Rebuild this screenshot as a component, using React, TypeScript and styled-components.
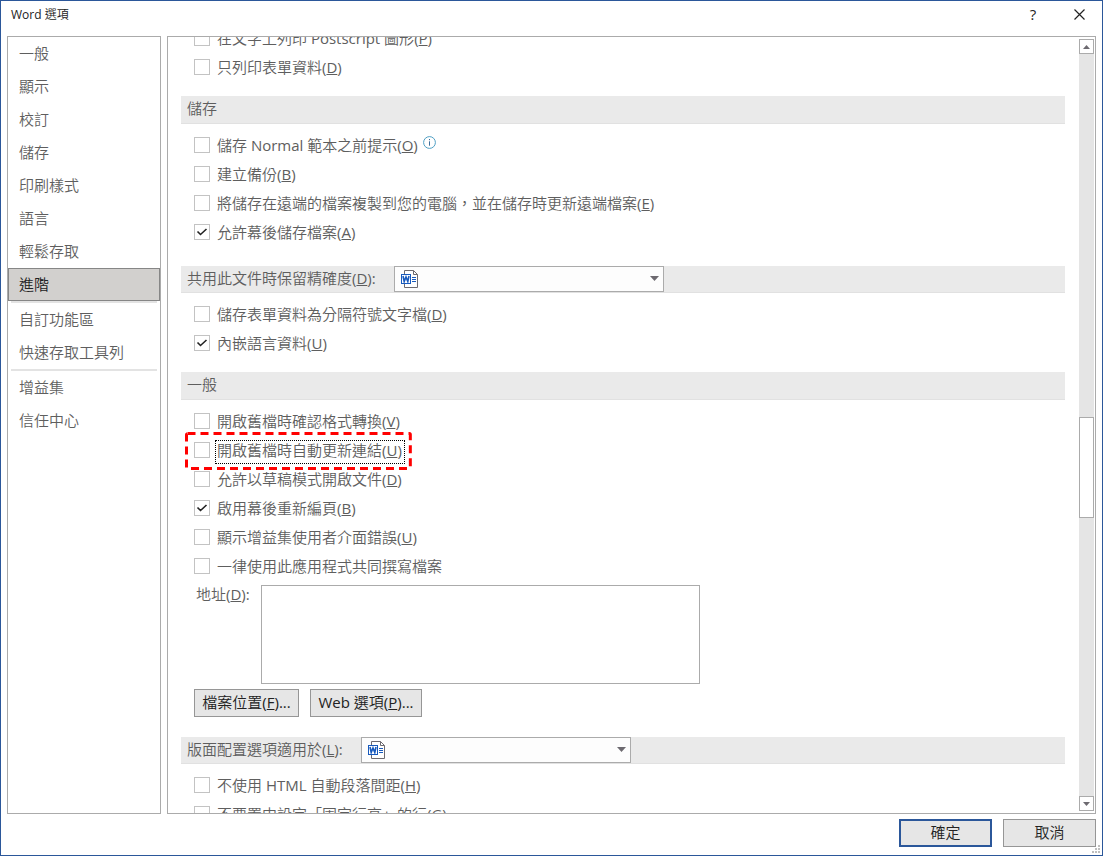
import React from 'react';
import styled, { createGlobalStyle, css } from 'styled-components';

const GlobalStyle = createGlobalStyle`
  *, *::before, *::after { box-sizing: border-box; }
  body { margin: 0; background: #fff; }
  body, button, select, textarea {
    font-family: 'Open Sans', 'Noto Sans CJK TC DemiLight', 'Noto Sans CJK TC', sans-serif;
    font-size: 15px;
    font-weight: 400;
    line-height: 20px;
  }
`;

const Dialog = styled.div`
  display: flex;
  flex-direction: column;
  height: 100vh;
  border: 1px solid #2b579a;
  background: #fff;
  color: #5e5e5e;
`;

const TitleBar = styled.header`
  display: flex;
  align-items: center;
  flex: none;
  height: 35px;
  padding: 0 14px 8px 10px;
`;

const Title = styled.h1`
  flex: 1;
  margin: 0;
  font-size: 12px;
  line-height: 16px;
  font-weight: 400;
  color: #222;
`;

const TitleButton = styled.button`
  display: flex;
  align-items: center;
  justify-content: center;
  width: 46px;
  height: 27px;
  padding: 0 0 2px;
  border: 0;
  background: none;
  color: #222;

  &:last-child { width: 18px; margin-left: 14px; padding: 0; }
`;

const Panels = styled.div`
  display: flex;
  flex: 1;
  min-height: 0;
  gap: 6px;
  padding: 0 6px;
`;

const Sidebar = styled.nav`
  flex: none;
  width: 154px;
  border: 1px solid #ababab;
`;

const NavItem = styled.button<{ $active?: boolean }>`
  display: block;
  width: 100%;
  height: 33px;
  padding: 0 11px 2px 10px;
  border: 1px solid transparent;
  background: none;
  color: inherit;
  text-align: left;

  ${(p) => p.$active && css`
    border-color: #868686;
    background: #d2d0ce;
    color: #222;
  `}
`;

const NavDivider = styled.hr`
  height: 2px;
  margin: 0 3px;
  border: 0;
  background: #e3e3e3;
`;

const ContentPanel = styled.main`
  display: flex;
  flex: 1;
  min-width: 0;
  border: 1px solid #ababab;
`;

const Viewport = styled.div`
  flex: 1;
  min-width: 0;
  overflow: hidden;
  padding: 0 14px 0 13px;
`;

const ScrolledContent = styled.div`
  margin-top: -13px;
`;

const Section = styled.section<{ $gap?: number }>`
  padding-bottom: ${(p) => p.$gap ?? 14}px;
`;

const SectionHeader = styled.div<{ $compact?: boolean }>`
  display: flex;
  align-items: flex-start;
  height: ${(p) => (p.$compact ? 27 : 28)}px;
  margin-bottom: 7px;
  padding-left: 6px;
  border-bottom: 1px solid #e1e1e1;
  background: #eaeaea;
`;

const SectionTitle = styled.h2`
  margin: 0;
  font-size: 15px;
  line-height: 24px;
  font-weight: 400;
`;

const SectionLabel = styled.label`
  margin-right: 18px;
  line-height: 24px;
`;

const Picker = styled.span`
  position: relative;
  display: block;
  width: 270px;
  height: 26px;
`;

const PickerSelect = styled.select`
  display: block;
  width: 100%;
  height: 100%;
  padding: 0 24px 0 28px;
  border: 1px solid #ababab;
  border-radius: 0;
  background: #fdfdfd;
  appearance: none;
`;

const PickerIcon = styled.span`
  position: absolute;
  top: 4px;
  left: 7px;
  display: flex;
  pointer-events: none;
`;

const PickerArrow = styled.span`
  position: absolute;
  top: 10px;
  right: 5px;
  display: flex;
  pointer-events: none;
`;

const Row = styled.div`
  display: flex;
  align-items: flex-start;
  height: 29px;
  padding-left: 13px;
`;

const Option = styled.label`
  position: relative;
  display: flex;
  align-items: center;
  gap: 5px;
  height: 28px;
`;

const CheckBox = styled.input`
  flex: none;
  width: 16px;
  height: 16px;
  margin: 0;
  border: 1px solid #c3c3c3;
  background: #fff;
  appearance: none;
  outline: none;

  &:checked {
    background: #fff url("data:image/svg+xml,%3Csvg xmlns='http://www.w3.org/2000/svg' viewBox='0 0 14 14'%3E%3Cpath d='M2.5 6.5l3 3 6-5.5' fill='none' stroke='%23222' stroke-width='1.6'/%3E%3C/svg%3E") center / 14px 14px no-repeat;
  }
`;

const OptionText = styled.span<{ $focused?: boolean }>`
  height: 24px;
  margin-top: 4px;
  padding: 0 2px 0 1px;
  border: 1px ${(p) => (p.$focused ? 'dotted #000' : 'solid transparent')};
  line-height: 19px;
  white-space: nowrap;
`;

const CalloutFrame = styled.svg`
  position: absolute;
  top: -4px;
  left: -9px;
  width: calc(100% + 16px);
  height: calc(100% + 10px);
  pointer-events: none;
`;

const InfoButton = styled.button`
  display: flex;
  margin: 5px 0 0 2px;
  padding: 0;
  border: 0;
  background: none;
`;

const AddressRow = styled.div`
  display: flex;
  align-items: flex-start;
  gap: 11px;
  padding: 4px 0 5px 15px;
`;

const AddressLabel = styled.label`
  line-height: 19px;
`;

const AddressBox = styled.textarea`
  display: block;
  width: 439px;
  height: 99px;
  border: 1px solid #ababab;
  background: #fff;
  resize: none;
`;

const ButtonRow = styled.div`
  display: flex;
  gap: 11px;
  padding-left: 13px;
`;

const PushButton = styled.button<{ $width: number; $primary?: boolean }>`
  width: ${(p) => p.$width}px;
  height: 28px;
  padding: 0 0 2px;
  border: ${(p) => (p.$primary ? '2px solid #2b579a' : '1px solid #969696')};
  background: #e6e6e6;
  color: #222;
  white-space: nowrap;
`;

const ScrollBar = styled.div`
  display: flex;
  flex-direction: column;
  flex: none;
  width: 15px;
  margin: 2px 1px 2px 0;
  background: #e5e5e5;
`;

const ScrollButton = styled.button`
  display: flex;
  align-items: center;
  justify-content: center;
  flex: none;
  height: 15px;
  padding: 0;
  border: 1px solid #ababab;
  background: #fff;
`;

const ScrollSpace = styled.div<{ $grow: number }>`
  flex: ${(p) => p.$grow} 1 0;
`;

const ScrollThumb = styled.div`
  flex: 99 1 0;
  border: 1px solid #ababab;
  background: #fff;
`;

const Footer = styled.footer`
  display: flex;
  position: relative;
  flex: none;
  justify-content: flex-end;
  gap: 11px;
  padding: 5px 6px 8px;
`;

const Grip = styled.svg`
  position: absolute;
  right: 2px;
  bottom: 2px;
`;

const WordDocumentIcon = () => (
  <svg width="18" height="18" viewBox="0 0 18 18" aria-hidden="true">
    <path d="M3.5 .5h9l4 4v13h-13z" fill="#fff" stroke="#6d6a70" />
    <path d="M12.5 .5v4h4" fill="none" stroke="#6d6a70" />
    <path d="M11 7.5h4M11 9.5h4M11 11.5h4" stroke="#185abd" />
    <rect x="0.5" y="4.5" width="9" height="9" fill="#fff" stroke="#185abd" />
    <path d="M2 6l1.2 5.5L5 7l1.8 4.5L8 6" fill="none" stroke="#185abd" strokeWidth="1.6" />
  </svg>
);

const InfoIcon = () => (
  <svg width="13" height="13" viewBox="0 0 13 13" aria-hidden="true">
    <circle cx="6.5" cy="6.5" r="5.9" fill="none" stroke="#4f9fc4" />
    <path d="M6.5 5.3v4.4M6.5 3v1.2" stroke="#3d6f9c" />
  </svg>
);

const Key = ({ k }: { k: string }) => <>(<u>{k}</u>)</>;

type CheckOptionProps = {
  text: string;
  k?: string;
  checked?: boolean;
  focused?: boolean;
  info?: boolean;
};

const CheckOption = ({ text, k, checked, focused, info }: CheckOptionProps) => (
  <Row>
    <Option>
      <CheckBox type="checkbox" defaultChecked={checked} />
      <OptionText $focused={focused}>{text}{k && <Key k={k} />}</OptionText>
      {focused && (
        <CalloutFrame aria-hidden="true">
          <rect x="1.5" y="1.5" width="calc(100% - 3px)" height="calc(100% - 3px)" rx="1"
            fill="none" stroke="#f00" strokeWidth="3" strokeDasharray="8 5" />
        </CalloutFrame>
      )}
    </Option>
    {info && <InfoButton aria-label="資訊"><InfoIcon /></InfoButton>}
  </Row>
);

const DocumentPicker = ({ id }: { id: string }) => (
  <Picker>
    <PickerSelect id={id}><option value="" /></PickerSelect>
    <PickerIcon><WordDocumentIcon /></PickerIcon>
    <PickerArrow>
      <svg width="9" height="5" viewBox="0 0 9 5" aria-hidden="true"><path d="M0 0h9L4.5 5z" fill="#6d6a70" /></svg>
    </PickerArrow>
  </Picker>
);

const navGroups = [
  ['一般', '顯示', '校訂', '儲存', '印刷樣式', '語言', '輕鬆存取', '進階'],
  ['自訂功能區', '快速存取工具列'],
  ['增益集', '信任中心'],
];

export default function App() {
  return (
    <>
      <GlobalStyle />
      <Dialog role="dialog" aria-labelledby="dialog-title">
        <TitleBar>
          <Title id="dialog-title">Word 選項</Title>
          <TitleButton aria-label="說明">?</TitleButton>
          <TitleButton aria-label="關閉">
            <svg width="11" height="11" viewBox="0 0 11 11" aria-hidden="true">
              <path d="M.5 .5l10 10M10.5 .5l-10 10" stroke="#222" strokeWidth="1.2" />
            </svg>
          </TitleButton>
        </TitleBar>

        <Panels>
          <Sidebar>
            {navGroups.map((group, i) => (
              <React.Fragment key={group[0]}>
                {i > 0 && <NavDivider />}
                {group.map((name) => (
                  <NavItem key={name} $active={name === '進階'}>{name}</NavItem>
                ))}
              </React.Fragment>
            ))}
          </Sidebar>

          <ContentPanel>
            <Viewport>
              <ScrolledContent>
                <Section>
                  <CheckOption text="在文字上列印 Postscript 圖形" k="P" />
                  <CheckOption text="只列印表單資料" k="D" />
                </Section>

                <Section $gap={19}>
                  <SectionHeader><SectionTitle>儲存</SectionTitle></SectionHeader>
                  <CheckOption text="儲存 Normal 範本之前提示" k="O" info />
                  <CheckOption text="建立備份" k="B" />
                  <CheckOption text="將儲存在遠端的檔案複製到您的電腦，並在儲存時更新遠端檔案" k="E" />
                  <CheckOption text="允許幕後儲存檔案" k="A" checked />
                </Section>

                <Section>
                  <SectionHeader $compact>
                    <SectionLabel htmlFor="fidelity">共用此文件時保留精確度<Key k="D" />:</SectionLabel>
                    <DocumentPicker id="fidelity" />
                  </SectionHeader>
                  <CheckOption text="儲存表單資料為分隔符號文字檔" k="D" />
                  <CheckOption text="內嵌語言資料" k="U" checked />
                </Section>

                <Section $gap={20}>
                  <SectionHeader><SectionTitle>一般</SectionTitle></SectionHeader>
                  <CheckOption text="開啟舊檔時確認格式轉換" k="V" />
                  <CheckOption text="開啟舊檔時自動更新連結" k="U" focused />
                  <CheckOption text="允許以草稿模式開啟文件" k="D" />
                  <CheckOption text="啟用幕後重新編頁" k="B" checked />
                  <CheckOption text="顯示增益集使用者介面錯誤" k="U" />
                  <CheckOption text="一律使用此應用程式共同撰寫檔案" />
                  <AddressRow>
                    <AddressLabel htmlFor="address">地址<Key k="D" />:</AddressLabel>
                    <AddressBox id="address" />
                  </AddressRow>
                  <ButtonRow>
                    <PushButton $width={105}>檔案位置<Key k="F" />...</PushButton>
                    <PushButton $width={112}>Web 選項<Key k="P" />...</PushButton>
                  </ButtonRow>
                </Section>

                <Section>
                  <SectionHeader $compact>
                    <SectionLabel htmlFor="layout">版面配置選項適用於<Key k="L" />:</SectionLabel>
                    <DocumentPicker id="layout" />
                  </SectionHeader>
                  <CheckOption text="不使用 HTML 自動段落間距" k="H" />
                  <CheckOption text="不要置中設定「固定行高」的行" k="G" />
                </Section>
              </ScrolledContent>
            </Viewport>

            <ScrollBar>
              <ScrollButton aria-label="向上捲動">
                <svg width="7" height="4" viewBox="0 0 7 4" aria-hidden="true"><path d="M0 4h7L3.5 0z" fill="#6d6a70" /></svg>
              </ScrollButton>
              <ScrollSpace $grow={363} />
              <ScrollThumb />
              <ScrollSpace $grow={278} />
              <ScrollButton aria-label="向下捲動">
                <svg width="7" height="4" viewBox="0 0 7 4" aria-hidden="true"><path d="M0 0h7L3.5 4z" fill="#6d6a70" /></svg>
              </ScrollButton>
            </ScrollBar>
          </ContentPanel>
        </Panels>

        <Footer>
          <PushButton $width={93} $primary>確定</PushButton>
          <PushButton $width={93}>取消</PushButton>
          <Grip width="8" height="8" viewBox="0 0 8 8" aria-hidden="true">
            <path d="M6 0h2v2H6zM3 3h2v2H3zM6 3h2v2H6zM0 6h2v2H0zM3 6h2v2H3zM6 6h2v2H6z" fill="#bfbfbf" />
          </Grip>
        </Footer>
      </Dialog>
    </>
  );
}
